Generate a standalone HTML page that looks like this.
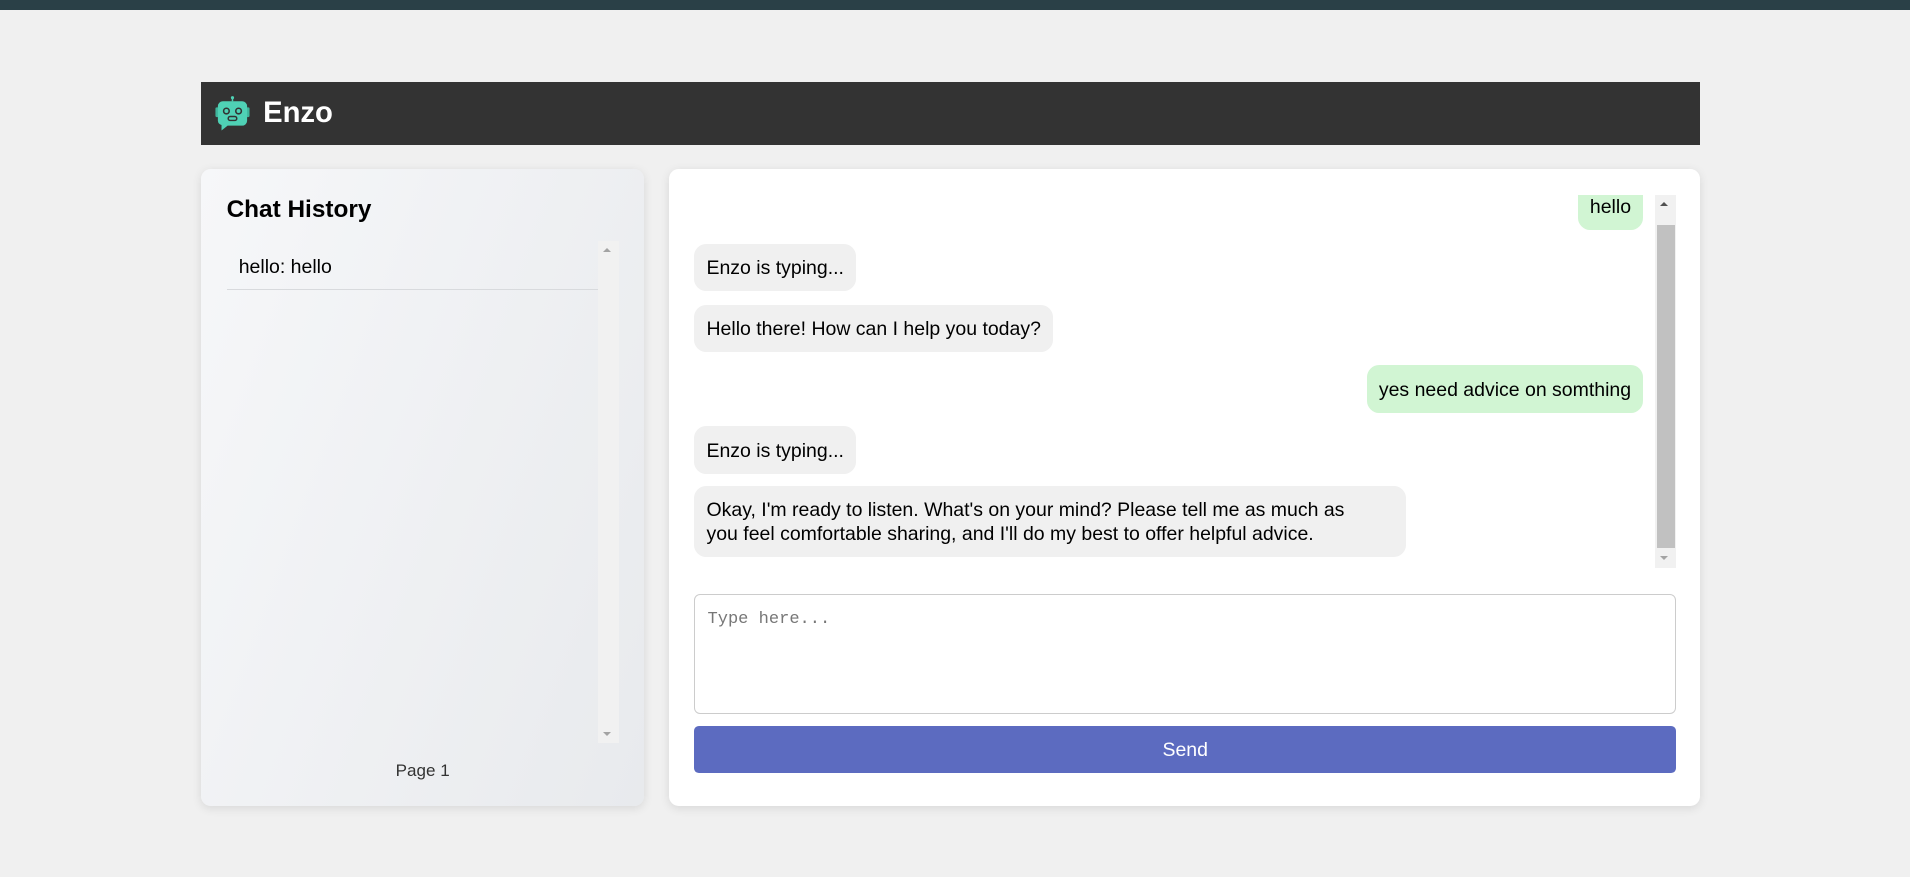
<!DOCTYPE html>
<html><head><meta charset="utf-8"><style>
html,body{margin:0;padding:0;background:#f0f0f0;}
body{zoom:1.21811;width:1568px;height:720px;position:relative;overflow:hidden;font-family:"Liberation Sans",Arial,sans-serif;}
.top{position:absolute;left:0;top:0;width:1568px;height:8px;background:#2a4047;}
.hdr{position:absolute;left:165px;top:67px;width:1231px;height:52px;background:#333;}
.hdr .t{position:absolute;left:51px;top:12px;color:#fff;font-weight:bold;font-size:24px;line-height:28px;}
.hdr svg{position:absolute;left:10px;top:10px;}
.left{position:absolute;left:165px;top:139px;width:364px;height:523px;border-radius:8px;background:linear-gradient(110deg,#f6f7f9,#e8eaed);box-shadow:0 2px 8px rgba(0,0,0,.1);}
.left h2{position:absolute;left:21px;top:21px;margin:0;font-size:20px;line-height:24px;}
.list{position:absolute;left:21px;top:59px;width:322px;height:412px;}
.item{width:305px;height:40px;border-bottom:1px solid #d8dadd;box-sizing:border-box;padding:11px 10px 9px;font-size:16px;line-height:20px;}
.sb{position:absolute;top:0;right:0;width:17px;height:100%;background:#f1f1f1;}
.up,.dn{position:absolute;left:4px;width:0;height:0;border-left:4px solid transparent;border-right:4px solid transparent;}
.up{top:6px;border-bottom:4px solid #a3a3a3;}
.dn{bottom:6px;border-top:4px solid #a3a3a3;}
.page{position:absolute;left:0;width:364px;top:486px;text-align:center;font-size:14px;color:#333;}
.right{position:absolute;left:549px;top:139px;width:847px;height:523px;border-radius:8px;background:#fff;box-shadow:0 2px 8px rgba(0,0,0,.1);}
.msgs{position:absolute;left:21px;top:21px;width:806px;height:306px;overflow:hidden;}
.b{position:absolute;padding:11px 10px 9px;border-radius:10px;font-size:16px;line-height:19px;box-sizing:border-box;}
.u{background:#d1f5d3;}
.a{background:#f0f0f0;left:0;}
.ta{position:absolute;left:21px;top:349px;width:806px;height:98px;border:1px solid #ccc;border-radius:5px;box-sizing:border-box;padding:12px 10px;font-family:"Liberation Mono",monospace;font-size:14px;color:#777;}
.send{position:absolute;left:21px;top:457px;width:806px;height:39px;background:#5c6bc0;border-radius:4px;color:#fff;text-align:center;line-height:40px;font-size:16px;}
</style></head><body>
<div class="top"></div>
<div class="hdr">
<svg width="32" height="32" viewBox="0 0 32 32">
<circle cx="16" cy="3" r="1.3" fill="#4fd1b5"/><rect x="15.4" y="3" width="1.2" height="3" fill="#4fd1b5"/>
<rect x="2" y="11" width="3" height="8" rx="1" fill="#3fb59c"/><rect x="27" y="11" width="3" height="8" rx="1" fill="#3fb59c"/>
<path d="M8 6h16a4 4 0 0 1 4 4v12a4 4 0 0 1-4 4H12l-5 4v-4.5A4 4 0 0 1 4 22V10a4 4 0 0 1 4-4z" fill="#4fd1b5"/>
<circle cx="11" cy="14" r="2.3" fill="none" stroke="#333" stroke-width="1.3"/><circle cx="21" cy="14" r="2.3" fill="none" stroke="#333" stroke-width="1.3"/>
<rect x="12.5" y="18.5" width="7" height="3.2" rx="1.5" fill="none" stroke="#333" stroke-width="1.2"/>
</svg>
<div class="t">Enzo</div></div>
<div class="left"><h2>Chat History</h2>
<div class="list"><div class="item">hello: hello</div><div class="sb"><div class="up"></div><div class="dn"></div></div></div>
<div class="page">Page 1</div></div>
<div class="right">
<div class="msgs">
<div class="b u" style="right:27px;top:-10px;">hello</div>
<div class="b a" style="top:40px;">Enzo is typing...</div>
<div class="b a" style="top:90px;">Hello there! How can I help you today?</div>
<div class="b u" style="right:27px;top:140px;">yes need advice on somthing</div>
<div class="b a" style="top:190px;">Enzo is typing...</div>
<div class="b a" style="top:239px;width:584px;padding-right:30px;">Okay, I'm ready to listen. What's on your mind? Please tell me as much as you feel comfortable sharing, and I'll do my best to offer helpful advice.</div>
<div class="sb"><div class="up" style="border-bottom-color:#505050"></div><div style="position:absolute;left:1px;top:25px;width:15px;height:265px;background:#c1c1c1"></div><div class="dn"></div></div>
</div>
<div class="ta">Type here...</div>
<div class="send">Send</div>
</div>
</body></html>
